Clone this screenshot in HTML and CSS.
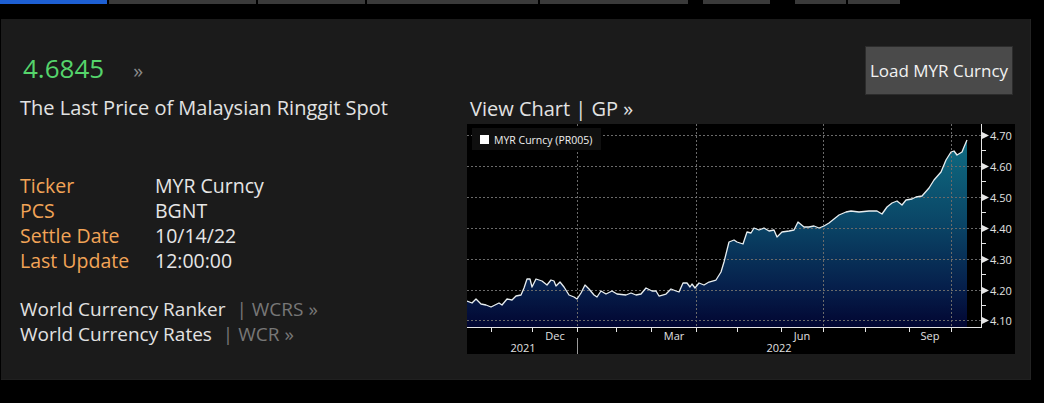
FILE: index.html
```html
<!DOCTYPE html>
<html>
<head>
<meta charset="utf-8">
<title>MYR Curncy</title>
<link rel="stylesheet" href="styles.css">
</head>
<body>
<div class="tabs">
  <div class="tab tab-active"></div>
  <div class="tab"></div>
  <div class="tab"></div>
  <div class="tab"></div>
  <div class="tab"></div>
  <div class="tab tab-gap-a"></div>
  <div class="tab tab-gap-b"></div>
  <div class="tab"></div>
</div>
<div class="panel">
  <div class="info">
    <div class="price"><span class="price-value">4.6845</span><span class="price-more">»</span></div>
    <div class="subtitle">The Last Price of Malaysian Ringgit Spot</div>
    <dl class="fields">
      <dt>Ticker</dt><dd>MYR Curncy</dd>
      <dt>PCS</dt><dd>BGNT</dd>
      <dt>Settle Date</dt><dd>10/14/22</dd>
      <dt>Last Update</dt><dd>12:00:00</dd>
    </dl>
    <div class="links">
      <div class="link">World Currency Ranker <span class="code">| WCRS »</span></div>
      <div class="link">World Currency Rates <span class="code">| WCR »</span></div>
    </div>
  </div>
  <div class="chart-col">
    <button class="load-btn">Load MYR Curncy</button>
    <div class="chart-title">View Chart | GP »</div>
    <div class="chart">
      <svg class="chart-svg" width="548" height="230" viewBox="468 124 548 230" xmlns="http://www.w3.org/2000/svg">
        <defs>
          <linearGradient id="fillGrad" gradientUnits="userSpaceOnUse" x1="0" y1="140" x2="0" y2="327">
            <stop offset="0" stop-color="#0f6c82"/>
            <stop offset="0.45" stop-color="#0a4566"/>
            <stop offset="0.78" stop-color="#06204c"/>
            <stop offset="1" stop-color="#020632"/>
          </linearGradient>
        </defs>
        <rect x="468" y="124" width="548" height="230" fill="#000"/>
        <polygon fill="url(#fillGrad)" points="468,301 473,303 477,299 482,304 487,305 492,307 500,303 503,305 508,299 513,300 517,296 522,295 525,288 528,279 531,279 533,287 537,279 543,281 548,285 552,280 555,281 557,286 561,282 565,287 570,295 575,297 578,299 582,293 586,285 590,289 595,295 598,297 602,291 607,294 613,291 618,294 627,295 632,293 637,295 642,294 647,288 653,291 657,291 660,296 667,294 672,289 677,291 680,292 684,283 688,283 691,287 693,284 696,288 700,283 705,285 710,282 717,280 722,272 725,262 730,242 735,240 738,242 744,244 748,232 752,233 755,228 760,230 765,228 770,231 775,230 778,237 783,232 790,231 795,230 799,222 805,227 810,227 815,226 820,228 825,226 830,223 835,219 840,215 847,212 852,211 860,212 870,211 878,211 883,214 888,207 893,203 898,201 903,205 907,200 913,199 917,197 923,196 930,188 935,180 942,172 947,160 952,152 955,151 958,155 963,152 965,147 968,140 968,327 468,327"/>
        <g stroke="#6a6a6a" stroke-width="1" stroke-dasharray="2 2" fill="none">
          <line x1="468" y1="135.5" x2="982" y2="135.5"/>
          <line x1="468" y1="166.5" x2="982" y2="166.5"/>
          <line x1="468" y1="197.5" x2="982" y2="197.5"/>
          <line x1="468" y1="228.5" x2="982" y2="228.5"/>
          <line x1="468" y1="259.5" x2="982" y2="259.5"/>
          <line x1="468" y1="290.5" x2="982" y2="290.5"/>
          <line x1="468" y1="320.5" x2="982" y2="320.5"/>
          <line x1="578.5" y1="124" x2="578.5" y2="327"/>
          <line x1="697.5" y1="124" x2="697.5" y2="327"/>
          <line x1="824.5" y1="124" x2="824.5" y2="327"/>
          <line x1="952.5" y1="124" x2="952.5" y2="327"/>
        </g>
        <polyline fill="none" stroke="#e8eef0" stroke-width="1.3" stroke-linejoin="round" points="468,301 473,303 477,299 482,304 487,305 492,307 500,303 503,305 508,299 513,300 517,296 522,295 525,288 528,279 531,279 533,287 537,279 543,281 548,285 552,280 555,281 557,286 561,282 565,287 570,295 575,297 578,299 582,293 586,285 590,289 595,295 598,297 602,291 607,294 613,291 618,294 627,295 632,293 637,295 642,294 647,288 653,291 657,291 660,296 667,294 672,289 677,291 680,292 684,283 688,283 691,287 693,284 696,288 700,283 705,285 710,282 717,280 722,272 725,262 730,242 735,240 738,242 744,244 748,232 752,233 755,228 760,230 765,228 770,231 775,230 778,237 783,232 790,231 795,230 799,222 805,227 810,227 815,226 820,228 825,226 830,223 835,219 840,215 847,212 852,211 860,212 870,211 878,211 883,214 888,207 893,203 898,201 903,205 907,200 913,199 917,197 923,196 930,188 935,180 942,172 947,160 952,152 955,151 958,155 963,152 965,147 968,140"/>
        <g stroke="#e6e6e6" stroke-width="1" fill="none">
          <line x1="468" y1="327.5" x2="983" y2="327.5"/>
          <line x1="982.5" y1="124" x2="982.5" y2="328"/>
          <line x1="492.5" y1="328" x2="492.5" y2="332"/>
          <line x1="533.5" y1="328" x2="533.5" y2="332"/>
          <line x1="578.5" y1="328" x2="578.5" y2="332"/>
          <line x1="617.5" y1="328" x2="617.5" y2="332"/>
          <line x1="652.5" y1="328" x2="652.5" y2="332"/>
          <line x1="697.5" y1="328" x2="697.5" y2="332"/>
          <line x1="738.5" y1="328" x2="738.5" y2="332"/>
          <line x1="782.5" y1="328" x2="782.5" y2="332"/>
          <line x1="824.5" y1="328" x2="824.5" y2="332"/>
          <line x1="866.5" y1="328" x2="866.5" y2="332"/>
          <line x1="910.5" y1="328" x2="910.5" y2="332"/>
          <line x1="952.5" y1="328" x2="952.5" y2="332"/>
          <line x1="982" y1="150.5" x2="987" y2="150.5"/>
          <line x1="982" y1="181.5" x2="987" y2="181.5"/>
          <line x1="982" y1="212.5" x2="987" y2="212.5"/>
          <line x1="982" y1="243.5" x2="987" y2="243.5"/>
          <line x1="982" y1="274.5" x2="987" y2="274.5"/>
          <line x1="982" y1="305.5" x2="987" y2="305.5"/>
        </g>
        <g fill="#e6e6e6">
          <polygon points="983,132 990,135.5 983,139"/>
          <polygon points="983,163 990,166.5 983,170"/>
          <polygon points="983,194 990,197.5 983,201"/>
          <polygon points="983,225 990,228.5 983,232"/>
          <polygon points="983,256 990,259.5 983,263"/>
          <polygon points="983,287 990,290.5 983,294"/>
          <polygon points="983,317 990,320.5 983,324"/>
        </g>
        <g class="axis-text">
          <text x="991" y="139.5">4.70</text>
          <text x="991" y="170.5">4.60</text>
          <text x="991" y="201.5">4.50</text>
          <text x="991" y="232.5">4.40</text>
          <text x="991" y="263.5">4.30</text>
          <text x="991" y="294.5">4.20</text>
          <text x="991" y="324.5">4.10</text>
        </g>
        <g class="axis-text" text-anchor="middle">
          <text x="556" y="340">Dec</text>
          <text x="675" y="340">Mar</text>
          <text x="803" y="340">Jun</text>
          <text x="931" y="340">Sep</text>
          <text x="524" y="352">2021</text>
          <text x="780" y="352">2022</text>
        </g>
        <line x1="578.5" y1="338" x2="578.5" y2="354" stroke="#9a9a9a" stroke-width="1"/>
        <rect x="473" y="128" width="129" height="22" fill="#0f0f0f"/>
        <rect x="481" y="135" width="9" height="9" fill="#ffffff"/>
        <text class="legend-text" x="495" y="143.5">MYR Curncy (PR005)</text>
      </svg>
    </div>
  </div>
</div>
</body>
</html>
```

FILE: styles.css
```css
html, body {
  margin: 0;
  padding: 0;
  background: #000;
}

body {
  font-family: "Open Sans", "Noto Sans", sans-serif;
  color: #e2e2e2;
  width: 1044px;
  height: 403px;
  overflow: hidden;
}

.tabs {
  display: grid;
  grid-template-columns: 107px 147px 107px 171px 148px 80px 74px 52px;
  column-gap: 2px;
  height: 5px;
}

.tab {
  background: #3a3a3a;
  height: 4px;
}

.tab-active {
  background: #1d5fd3;
}

.tab-gap-a {
  margin-left: 13px;
}

.tab-gap-b {
  margin-left: 23px;
}

.panel {
  margin-top: 14px;
  margin-left: 1px;
  width: 1030px;
  height: 361px;
  box-sizing: border-box;
  background: #1b1b1b;
  border-right: 1px solid #232323;
  border-bottom: 1px solid #202020;
  display: flex;
}

.info {
  flex: 1;
  padding-left: 19px;
  padding-top: 33px;
}

.price {
  display: flex;
  align-items: baseline;
  height: 32px;
}

.price-value {
  font-size: 26px;
  line-height: 32px;
  color: #55d46b;
  padding-left: 3px;
}

.price-more {
  font-size: 20px;
  line-height: 32px;
  color: #8a8a8a;
  margin-left: 29px;
}

.subtitle {
  margin-top: 11px;
  font-size: 20px;
  line-height: 25px;
  color: #e2e2e2;
}

.fields {
  margin: 53px 0 0 0;
  display: grid;
  grid-template-columns: 135px auto;
  font-size: 19.5px;
  line-height: 25px;
}

.fields dt {
  color: #f2a457;
}

.fields dd {
  margin: 0;
  color: #e6e6e6;
}

.links {
  margin-top: 24px;
  font-size: 19px;
  line-height: 25px;
  color: #e2e2e2;
}

.code {
  color: #777777;
  margin-left: 6px;
}

.chart-col {
  width: 548px;
  margin-right: 15px;
  padding-top: 27px;
  display: flex;
  flex-direction: column;
}

.load-btn {
  align-self: flex-end;
  margin-right: 2px;
  width: 148px;
  height: 49px;
  background: #4a4a4a;
  border: 1px solid #2c2c2c;
  color: #f2f2f2;
  font-family: "Open Sans", "Noto Sans", sans-serif;
  font-size: 17px;
  padding: 0;
}

.chart-title {
  margin-top: 1px;
  margin-bottom: 3px;
  padding-left: 3px;
  font-size: 20px;
  line-height: 25px;
  color: #e2e2e2;
}

.chart {
  width: 548px;
  height: 230px;
  background: #000;
}

.chart-svg {
  display: block;
}

.axis-text text {
  font-family: "Open Sans", "Noto Sans", sans-serif;
  font-size: 11px;
  fill: #e0e0e0;
}

.legend-text {
  font-family: "Open Sans", "Noto Sans", sans-serif;
  font-size: 10.5px;
  fill: #f0f0f0;
}
```
